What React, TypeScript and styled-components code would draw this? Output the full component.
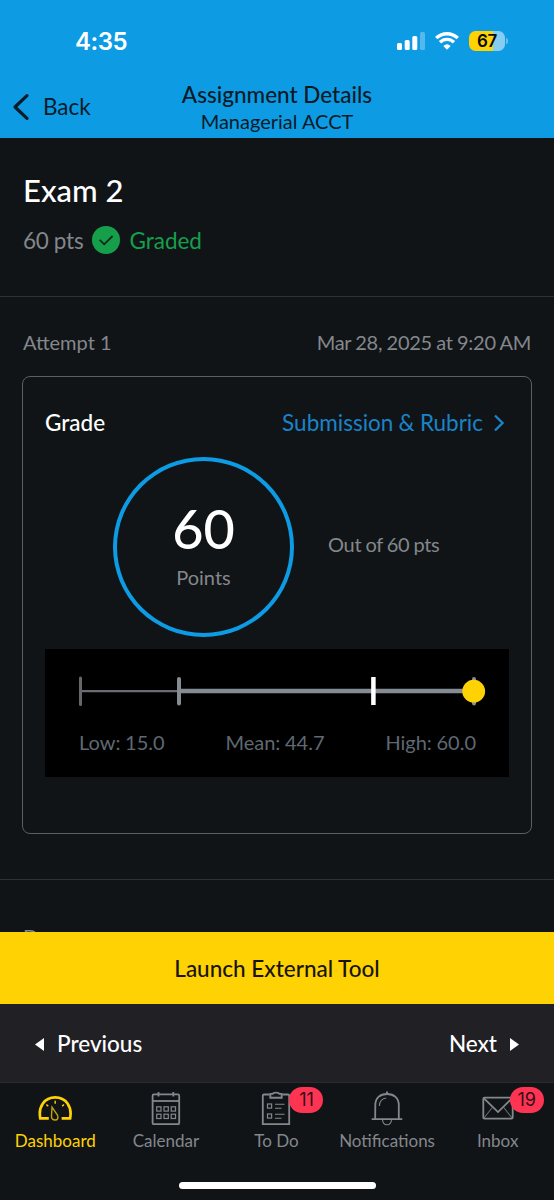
import React from "react";
import styled, { createGlobalStyle } from "styled-components";

const color = {
  page: "#101417",
  brand: "#0d9be4",
  ink: "#0a1b28",
  muted: "#84878c",
  line: "#2e3135",
  yellow: "#ffd204",
  green: "#169f4b",
  link: "#1a83c9",
  stat: "#5f6973",
};

const GlobalStyle = createGlobalStyle`
  * { box-sizing: border-box; }
  body {
    margin: 0;
    background: ${color.page};
    color: #fff;
    font-family: Lato, "Liberation Sans", sans-serif;
  }
  svg { display: block; flex: none; }
`;

const Screen = styled.div`
  display: flex;
  flex-direction: column;
  width: 554px;
  height: 1200px;
  overflow: hidden;
  background: ${color.page};
`;

const Label = styled.span<{
  $size: number;
  $color?: string;
  $weight?: number;
  $word?: number;
  $track?: number;
  $line?: number;
}>`
  font-size: ${(p) => p.$size}px;
  line-height: ${(p) => p.$line ?? 28}px;
  font-weight: ${(p) => p.$weight ?? 400};
  word-spacing: ${(p) => p.$word ?? 0}px;
  letter-spacing: ${(p) => (p.$track ? `${p.$track}px` : "normal")};
  color: ${(p) => p.$color ?? "#fff"};
  white-space: nowrap;
`;

const Header = styled.header`
  flex: none;
  height: 138px;
  background: ${color.brand};
`;

const StatusBar = styled.div`
  display: flex;
  align-items: center;
  justify-content: space-between;
  height: 80px;
  padding: 2px 46px 0 75px;
`;

const Clock = styled.span`
  padding-top: 1px;
  font: 600 24px/28px Inter, sans-serif;
  letter-spacing: -0.5px;
`;

const StatusIcons = styled.div`
  display: flex;
  align-items: center;
  gap: 10px;
`;

const Battery = styled.div`
  display: flex;
  align-items: center;
  gap: 1px;
`;

const BatteryBody = styled.div`
  width: 36px;
  height: 20px;
  border-radius: 6.5px;
  background: linear-gradient(90deg, ${color.yellow} 67%, #86cdf1 67%);
  color: #0a0a0a;
  text-align: center;
  font: 600 17px/20px Inter, sans-serif;
  letter-spacing: -0.3px;
`;

const BatteryTip = styled.div`
  width: 2px;
  height: 6px;
  border-radius: 0 2px 2px 0;
  background: #6cc0ec;
`;

const NavBar = styled.nav`
  display: grid;
  grid-template-columns: 1fr auto 1fr;
  height: 58px;
`;

const BackButton = styled.div`
  display: flex;
  align-items: center;
  gap: 13px;
  height: 54px;
  padding-left: 12px;
`;

const NavTitle = styled.div`
  display: flex;
  flex-direction: column;
  align-items: center;
  padding-top: 1px;
`;

const Content = styled.main`
  flex: none;
  height: 794px;
  overflow: hidden;
`;

const Summary = styled.section`
  height: 159px;
  padding: 34px 23px 0;
  border-bottom: 1px solid ${color.line};
`;

const GradeStatus = styled.div`
  display: flex;
  align-items: flex-start;
  margin-top: 18px;
  gap: 9px;
`;

const StatusLabel = styled.div`
  display: flex;
  padding-top: 1px;
`;

const Attempt = styled.section`
  height: 583px;
  padding: 31px 22px 0;
  border-bottom: 1px solid ${color.line};
`;

const Row = styled.div`
  display: flex;
  align-items: center;
  justify-content: space-between;
`;

const AttemptRow = styled(Row)`
  padding: 0 1px;
`;

const GradeCard = styled.div`
  height: 458px;
  margin-top: 20px;
  padding: 32px 22px 0;
  border: 1px solid #5b5e62;
  border-radius: 8px;
`;

const LinkRow = styled.div`
  display: flex;
  align-items: center;
  gap: 11px;
  padding-right: 5px;
`;

const ScoreRow = styled.div`
  display: flex;
  align-items: center;
  gap: 34px;
  margin-top: 20px;
  padding-left: 68px;
`;

const ScoreRing = styled.div`
  display: flex;
  flex-direction: column;
  align-items: center;
  width: 181px;
  height: 180px;
  padding-top: 38px;
  border: 4.5px solid ${color.brand};
  border-radius: 50%;
`;

const OutOf = styled.div`
  display: flex;
  padding-bottom: 6px;
`;

const Stats = styled.div`
  height: 128px;
  margin-top: 12px;
  padding-top: 26px;
  background: #000;
`;

const StatLabels = styled.div`
  display: flex;
  justify-content: space-between;
  margin-top: 21px;
  padding: 0 33px 0 34px;
`;

const DueSection = styled.div`
  padding: 42px 23px 0;
`;

const Launch = styled.div`
  flex: none;
  display: flex;
  align-items: center;
  justify-content: center;
  height: 72px;
  padding-top: 2px;
  background: ${color.yellow};
`;

const Pager = styled.div`
  flex: none;
  display: flex;
  align-items: center;
  justify-content: space-between;
  height: 79px;
  padding: 2px 35px 0 35px;
  background: #212125;
  border-bottom: 1px solid #292b2f;
`;

const PagerItem = styled.div`
  display: flex;
  align-items: center;
  gap: 13px;
`;

const TabBar = styled.nav`
  flex: none;
  display: flex;
  height: 99px;
  padding-right: 1px;
`;

const Tab = styled.div`
  flex: 1;
  display: flex;
  flex-direction: column;
  align-items: center;
  padding-top: 5px;
`;

const TabIcon = styled.div`
  position: relative;
  height: 41px;
`;

const Badge = styled.span`
  position: absolute;
  left: 28px;
  top: -1px;
  width: 34px;
  height: 26px;
  border-radius: 13px;
  background: #ff3352;
  color: #301018;
  text-align: center;
  font: 400 18px/26px Inter, sans-serif;
`;

const HomeBar = styled.div`
  flex: none;
  align-self: center;
  width: 197px;
  height: 7px;
  border-radius: 4px;
  background: #fff;
`;

const SignalIcon = () => (
  <svg width="28" height="18" viewBox="0 0 28 18" fill="#fff">
    <rect x="0" y="11" width="5" height="7" rx="1.5" />
    <rect x="7.7" y="8" width="5" height="10" rx="1.5" />
    <rect x="15.3" y="4" width="5" height="14" rx="1.5" />
    <rect x="23" y="0" width="5" height="18" rx="1.5" opacity=".3" />
  </svg>
);

const WifiIcon = () => (
  <svg width="24" height="18" viewBox="0 0 24 18" fill="none" stroke="#fff" strokeWidth="3.4">
    <path d="M1.2 6.1Q6 1.7 12 1.7T22.8 6.1" />
    <path d="M5 10.3Q8 7.4 12 7.4T19 10.3" />
    <path d="M8.3 13.9Q12 10.5 15.7 13.9L12 17.7Z" fill="#fff" stroke="none" />
  </svg>
);

const Chart = () => (
  <svg width="464" height="32" viewBox="0 0 464 32">
    <path d="M36 16.1H134" stroke="#6b6c71" strokeWidth="2.4" />
    <path d="M35.5 3V29.5" stroke="#66676d" strokeWidth="3" strokeLinecap="round" />
    <path d="M134 16H429" stroke="#868c94" strokeWidth="4.5" />
    <path d="M134 4V28.5" stroke="#868c94" strokeWidth="4" strokeLinecap="round" />
    <path d="M328.4 2V30" stroke="#fff" strokeWidth="4.5" />
    <path d="M429 4V28.5" stroke="#868c94" strokeWidth="4" strokeLinecap="round" />
    <circle cx="428.7" cy="16.2" r="11.4" fill={color.yellow} />
  </svg>
);

const DashboardIcon = () => (
  <svg width="36" height="40" viewBox="0 0 36 40" fill="none" stroke={color.yellow}>
    <path d="M11.8 30.4H3.3C1 18.6 7.5 9.4 18.2 9.4S35.4 18.6 33.1 30.4H24.6" strokeWidth="2.7" />
    <path d="M18.2 12.8V15.8M11.2 18.2l-1.8-1.8M25.2 18.2l1.8-1.8" strokeWidth="1.4" />
    <path d="M15 19.2L20.6 27.3Q21.8 32 18.2 32Q14.4 31.9 14.5 28Z" strokeWidth="1.4" opacity=".75" />
  </svg>
);

const CalendarIcon = () => (
  <svg width="30" height="40" viewBox="0 0 30 40" fill="none" stroke={color.muted}>
    <rect x="1.6" y="6.4" width="26.6" height="29.8" rx="1.3" strokeWidth="1.8" />
    <path d="M2 13H28" strokeWidth="1.8" />
    <path d="M7.5 4V8.5M22.3 4V8.5" strokeWidth="1.8" />
    {[18.8, 26.2].map((y) =>
      [5.7, 13, 20.2].map((x) => (
        <rect key={`${x}-${y}`} x={x} y={y} width="4.3" height="4.3" strokeWidth="1.2" />
      )),
    )}
  </svg>
);

const TodoIcon = () => (
  <svg width="30" height="40" viewBox="0 0 30 40" fill="none" stroke={color.muted}>
    <path d="M8.5 6.5H3Q1.8 6.5 1.8 7.7V36.2H28.2V7.7Q28.2 6.5 27 6.5H21.5" strokeWidth="1.8" />
    <path d="M9.3 9.8V5.9H11.7Q12 4.6 15 4.6T18.3 5.9H20.7V9.8Z" strokeWidth="1.9" />
    {[16, 26].map((y) => (
      <rect key={y} x="6.5" y={y} width="4.1" height="4.1" strokeWidth="1.2" />
    ))}
    <path d="M14 16.2H23.5M14 20.2H20.5M14 26.2H23.5M14 30.2H20.5" strokeWidth="1.1" />
  </svg>
);

const BellIcon = () => (
  <svg width="32" height="40" viewBox="0 0 32 40" fill="none" stroke={color.muted}>
    <path d="M.7 31.2H31.3M4.2 31V28.5L4.3 17.2C4.3 9.8 9 6 16 6S27.8 9.8 27.8 17.2V31" strokeWidth="1.8" />
    <path d="M16 3.5V6" strokeWidth="2" />
    <path d="M8.4 18Q8.5 11 15.2 10" strokeWidth="1.1" />
    <path d="M11.5 31.5Q11.8 36.8 16 36.8T20.5 31.5" strokeWidth="1.1" />
  </svg>
);

const MailIcon = () => (
  <svg width="32" height="40" viewBox="0 0 32 40" fill="none" stroke={color.muted}>
    <rect x="1.3" y="9.7" width="29.4" height="21" rx="1.2" strokeWidth="1.8" />
    <path d="M2 10.3L16 24.1L30 10.3" strokeWidth="1.8" />
    <path d="M2 30L10.3 19.5M30 30L21.7 19.5" strokeWidth="1.1" opacity=".75" />
  </svg>
);

const tabs = [
  { name: "Dashboard", icon: <DashboardIcon />, active: true },
  { name: "Calendar", icon: <CalendarIcon /> },
  { name: "To Do", icon: <TodoIcon />, badge: 11 },
  { name: "Notifications", icon: <BellIcon /> },
  { name: "Inbox", icon: <MailIcon />, badge: 19 },
];

export default function App() {
  return (
    <Screen>
      <GlobalStyle />
      <Header>
        <StatusBar>
          <Clock>4:35</Clock>
          <StatusIcons>
            <SignalIcon />
            <WifiIcon />
            <Battery>
              <BatteryBody>67</BatteryBody>
              <BatteryTip />
            </Battery>
          </StatusIcons>
        </StatusBar>
        <NavBar>
          <BackButton>
            <svg width="18" height="28" viewBox="0 0 18 28" fill="none" stroke={color.ink} strokeWidth="3.2" strokeLinecap="round" strokeLinejoin="round">
              <path d="M15 2.6L3 14L15 25.4" />
            </svg>
            <Label $size={22.5} $color={color.ink}>Back</Label>
          </BackButton>
          <NavTitle>
            <Label $size={22.5} $weight={500} $color={color.ink}>Assignment Details</Label>
            <Label $size={20} $line={25} $color={color.ink}>Managerial ACCT</Label>
          </NavTitle>
        </NavBar>
      </Header>
      <Content>
        <Summary>
          <Label as="div" $size={31} $weight={500} $line={36}>Exam 2</Label>
          <GradeStatus>
            <StatusLabel>
              <Label $size={22.5} $word={-0.5} $track={-0.2} $color={color.muted}>60 pts</Label>
            </StatusLabel>
            <svg width="28" height="28" viewBox="0 0 28 28">
              <circle cx="14" cy="14" r="14" fill={color.green} />
              <path d="M7.7 13.8L12.2 18.3L20.6 10" fill="none" stroke="#10291c" strokeWidth="1.8" />
            </svg>
            <StatusLabel>
              <Label $size={22.5} $color={color.green}>Graded</Label>
            </StatusLabel>
          </GradeStatus>
        </Summary>
        <Attempt>
          <AttemptRow>
            <Label $size={20} $color={color.muted}>Attempt 1</Label>
            <Label $size={20} $word={-0.5} $track={-0.27} $color={color.muted}>Mar 28, 2025 at 9:20 AM</Label>
          </AttemptRow>
          <GradeCard>
            <Row>
              <Label $size={22.5} $weight={500}>Grade</Label>
              <LinkRow>
                <Label $size={22.5} $word={-0.5} $color={color.link}>Submission &amp; Rubric</Label>
                <svg width="10" height="18" viewBox="0 0 10 18" fill="none" stroke={color.link} strokeWidth="2.3">
                  <path d="M1 1.5L8.5 9L1 16.5" />
                </svg>
              </LinkRow>
            </Row>
            <ScoreRow>
              <ScoreRing>
                <Label $size={54} $weight={500} $line={60}>60</Label>
                <Label $size={20} $color={color.muted} $line={37}>Points</Label>
              </ScoreRing>
              <OutOf>
                <Label $size={20} $word={-0.7} $track={-0.3} $color={color.muted}>Out of 60 pts</Label>
              </OutOf>
            </ScoreRow>
            <Stats>
              <Chart />
              <StatLabels>
                <Label $size={20} $word={-0.5} $color={color.stat}>Low: 15.0</Label>
                <Label $size={20} $word={-0.5} $color={color.stat}>Mean: 44.7</Label>
                <Label $size={20} $word={-0.5} $color={color.stat}>High: 60.0</Label>
              </StatLabels>
            </Stats>
          </GradeCard>
        </Attempt>
        <DueSection>
          <Label $size={20} $color={color.muted}>Due</Label>
        </DueSection>
      </Content>
      <Launch>
        <Label $size={22.5} $weight={500} $color="#17150a">Launch External Tool</Label>
      </Launch>
      <Pager>
        <PagerItem>
          <svg width="9" height="13" viewBox="0 0 9 13" fill="#fff"><path d="M0 6.5L9 0V13Z" /></svg>
          <Label $size={22.5} $weight={500}>Previous</Label>
        </PagerItem>
        <PagerItem>
          <Label $size={22.5} $weight={500}>Next</Label>
          <svg width="9" height="13" viewBox="0 0 9 13" fill="#fff"><path d="M9 6.5L0 0V13Z" /></svg>
        </PagerItem>
      </Pager>
      <TabBar>
        {tabs.map((t) => (
          <Tab key={t.name}>
            <TabIcon>
              {t.icon}
              {t.badge && <Badge>{t.badge}</Badge>}
            </TabIcon>
            <Label $size={17} $line={24} $color={t.active ? color.yellow : color.muted}>{t.name}</Label>
          </Tab>
        ))}
      </TabBar>
      <HomeBar />
    </Screen>
  );
}
